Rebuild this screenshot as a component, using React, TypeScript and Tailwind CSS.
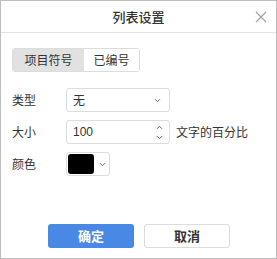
import React from "react";

const font = { fontFamily: '"Noto Sans CJK SC", "Liberation Sans", sans-serif' };

const Chevron = () => (
    <svg width="7" height="5" viewBox="0 0 7 5" className="text-[#666]">
        <path d="M1 1.2 L3.5 3.7 L6 1.2" fill="none" stroke="currentColor" strokeWidth="1" />
    </svg>
);

export default function App() {
    return (
        <div
            className="w-[277px] h-[259px] bg-white border border-[#bdbdbd] flex flex-col text-[#333]"
            style={font}
        >
            {/* HEADER */}
            <div className="relative h-[32px] shrink-0 border-b border-[#e3e3e3] flex items-center justify-center">
                <span className="text-[13px] font-medium leading-none">列表设置</span>
                <svg className="absolute right-[9px] top-[10px]" width="12" height="12" viewBox="0 0 12 12">
                    <path d="M1 1 L11 11 M11 1 L1 11" stroke="#a0a0a0" strokeWidth="1.1" />
                </svg>
            </div>

            <div className="flex-1 px-[11px] pt-[15px]">
                {/* TABS */}
                <div className="flex w-[128px] h-[24px] border border-[#dcdcdc] rounded-[3px] overflow-hidden text-[12px]">
                    <div className="w-[71px] bg-[#e1e1e1] flex items-center justify-center">项目符号</div>
                    <div className="flex-1 bg-white flex items-center justify-center">已编号</div>
                </div>

                {/* FIELDS */}
                <div className="mt-[16px] flex flex-col gap-[8px] text-[12px]">
                    <div className="flex items-center h-[24px]">
                        <div className="w-[54px]">类型</div>
                        <div className="w-[104px] h-[24px] border border-[#dcdcdc] rounded-[3px] flex items-center justify-between pl-[6px] pr-[8px]">
                            <span>无</span>
                            <Chevron />
                        </div>
                    </div>
                    <div className="flex items-center h-[24px]">
                        <div className="w-[54px]">大小</div>
                        <div className="w-[104px] h-[24px] border border-[#dcdcdc] rounded-[3px] flex items-center justify-between pl-[6px] pr-[6px]">
                            <span style={{ fontFamily: '"Liberation Sans", sans-serif' }}>100</span>
                            <div className="flex flex-col gap-[5px]">
                                <svg width="7" height="5" viewBox="0 0 7 5" className="text-[#666]">
                                    <path d="M1 3.8 L3.5 1.3 L6 3.8" fill="none" stroke="currentColor" strokeWidth="1" />
                                </svg>
                                <Chevron />
                            </div>
                        </div>
                        <span className="ml-[6px]">文字的百分比</span>
                    </div>
                    <div className="flex items-center h-[24px]">
                        <div className="w-[54px]">颜色</div>
                        <div className="w-[44px] h-[24px] border border-[#dcdcdc] rounded-[3px] flex items-center pl-[1px] gap-[5px]">
                            <div className="w-[26px] h-[20px] bg-black rounded-[3px]" />
                            <Chevron />
                        </div>
                    </div>
                </div>
            </div>

            {/* FOOTER */}
            <div className="h-[34px] shrink-0 flex justify-center gap-[10px] pl-[1px]">
                <button className="w-[86px] h-[24px] bg-[#4a88e6] text-white text-[13px] font-bold rounded-[3px]">
                    确定
                </button>
                <button className="w-[86px] h-[24px] bg-white border border-[#dcdcdc] text-[#333] text-[13px] font-bold rounded-[3px]">
                    取消
                </button>
            </div>
        </div>
    );
}
